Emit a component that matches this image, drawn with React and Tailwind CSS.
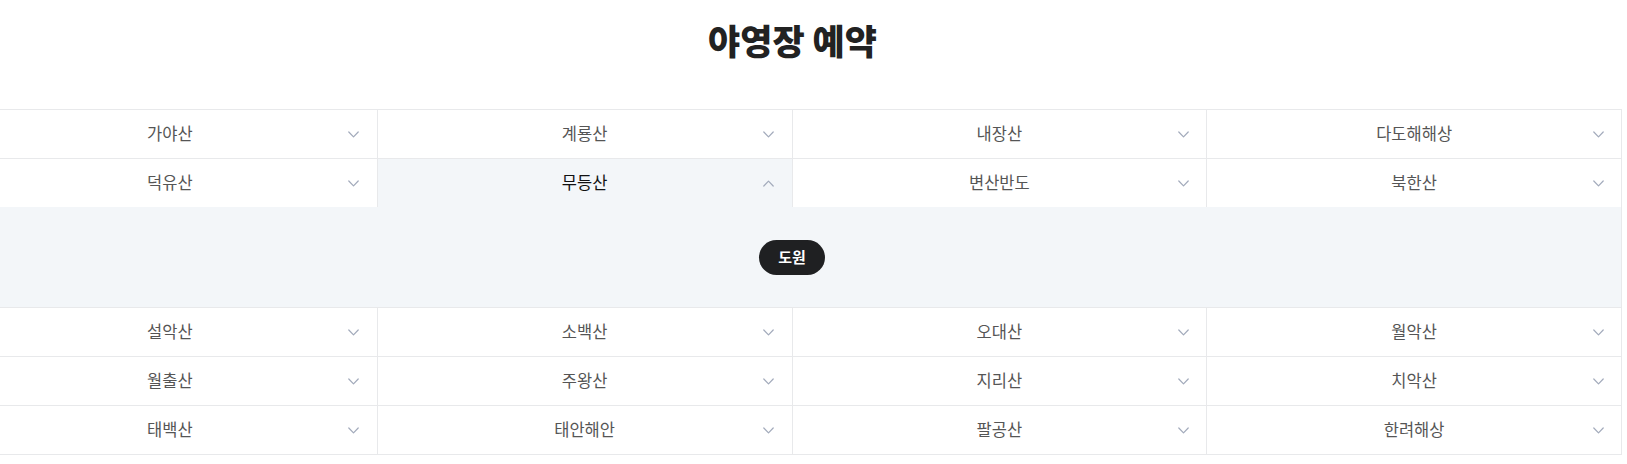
import React from "react";

const rowsTop = [
  ["가야산", "계룡산", "내장산", "다도해해상"],
  ["덕유산", "무등산", "변산반도", "북한산"],
];
const rowsBottom = [
  ["설악산", "소백산", "오대산", "월악산"],
  ["월출산", "주왕산", "지리산", "치악산"],
  ["태백산", "태안해안", "팔공산", "한려해상"],
];

function Chevron({ up }) {
  return (
    <svg width="11" height="7" viewBox="0 0 11 7" fill="none">
      <polyline
        points={up ? "0.8,6 5.5,1.2 10.2,6" : "0.8,1 5.5,5.8 10.2,1"}
        stroke="#a2aabb"
        strokeWidth="1.2"
        strokeLinecap="round"
        strokeLinejoin="round"
      />
    </svg>
  );
}

function Cell({ name, active, noBottom }) {
  return (
    <div
      className={
        "grid grid-cols-[46px_1fr_46px] items-center border-r border-[#e8e9eb] " +
        (noBottom ? "h-[48px] " : "h-[49px] border-b ") +
        (active ? "bg-[#f3f6f9] text-[#111111]" : "bg-white text-[#555555]")
      }
    >
      <span />
      <span className="text-center text-[16.5px] leading-[22px] -translate-y-px">{name}</span>
      <span className="flex justify-center">
        <Chevron up={active} />
      </span>
    </div>
  );
}

export default function App() {
  return (
    <div className="bg-white min-h-[464px] overflow-hidden font-['Noto_Sans_CJK_KR','Noto_Sans',sans-serif]">
      <div className="ml-[-37px] w-[1659px]">
        <h1 className="pt-[18px] pb-[47px] text-center text-[35px] leading-[44px] font-black text-[#222222]">
          야영장 예약
        </h1>
        <div className="border-t border-[#e8e9eb]">
          {rowsTop.map((row, ri) => (
            <div key={ri} className="grid grid-cols-4">
              {row.map((n) => (
                <Cell key={n} name={n} active={n === "무등산"} noBottom={ri === 1} />
              ))}
            </div>
          ))}
          <div className="h-[101px] bg-[#f3f6f9] border-b border-r border-[#e8e9eb] flex items-center justify-center">
            <button className="h-[35px] px-[19px] rounded-full bg-[#1f2022] text-white text-[15px] font-bold leading-[20px]">
              도원
            </button>
          </div>
          {rowsBottom.map((row, ri) => (
            <div key={ri} className="grid grid-cols-4">
              {row.map((n) => (
                <Cell key={n} name={n} />
              ))}
            </div>
          ))}
        </div>
      </div>
    </div>
  );
}
